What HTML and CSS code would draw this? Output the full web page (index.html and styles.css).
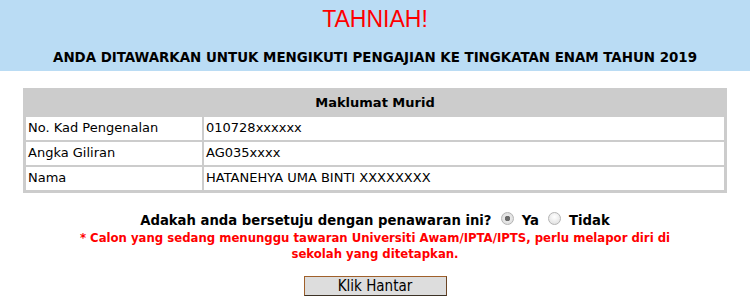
FILE: index.html
```html
<!DOCTYPE html>
<html lang="ms">
<head>
    <meta charset="UTF-8">
    <title>Tawaran Tingkatan Enam</title>
    <link rel="stylesheet" href="styles.css">
</head>
<body>

<div class="banner">
    <h1>TAHNIAH!</h1>
    <h2>ANDA DITAWARKAN UNTUK MENGIKUTI PENGAJIAN KE TINGKATAN ENAM TAHUN 2019</h2>
</div>

<table class="murid">
    <tr>
        <th colspan="2">Maklumat Murid</th>
    </tr>
    <tr>
        <td class="label">No. Kad Pengenalan</td>
        <td>010728xxxxxx</td>
    </tr>
    <tr>
        <td class="label">Angka Giliran</td>
        <td>AG035xxxx</td>
    </tr>
    <tr>
        <td class="label">Nama</td>
        <td>HATANEHYA UMA BINTI XXXXXXXX</td>
    </tr>
</table>

<form class="jawapan">
    <div class="soalan">
        Adakah anda bersetuju dengan penawaran ini?
        <input type="radio" name="setuju" value="ya" checked> Ya
        <input type="radio" name="setuju" value="tidak"> Tidak
    </div>
    <p class="nota">* Calon yang sedang menunggu tawaran Universiti Awam/IPTA/IPTS, perlu melapor diri di sekolah yang ditetapkan.</p>
    <button type="button" class="hantar">Klik Hantar</button>
</form>

</body>
</html>
```

FILE: styles.css
```css
body {
    margin: 0;
    font-family: "DejaVu Sans", Verdana, sans-serif;
    font-size: 13px;
    color: black;
    background: white;
}
.banner {
    background: #badcf4;
    text-align: center;
    padding: 6px 0 5px 0;
}
.banner h1 {
    margin: 0;
    font-family: "Liberation Sans", Arial, sans-serif;
    font-weight: normal;
    font-size: 23px;
    line-height: 26px;
    color: red;
}
.banner h2 {
    margin: 16px 0 0 0;
    font-family: "DejaVu Sans Condensed", Tahoma, sans-serif;
    font-size: 14.9px;
    line-height: 18px;
}
.murid {
    margin: 17px auto 0 auto;
    width: 704px;
    border: 1px solid #cccccc;
    border-spacing: 2px;
    background: #cccccc;
}
.murid th {
    background: #cccccc;
    padding: 4px 2px;
    line-height: 16px;
    font-weight: bold;
}
.murid td {
    background: white;
    padding: 3px 2px 4px 2px;
    line-height: 16px;
}
.murid td.label {
    width: 172px;
}
.jawapan {
    text-align: center;
    margin-top: 17px;
}
.soalan {
    font-family: "DejaVu Sans Condensed", Tahoma, sans-serif;
    font-size: 14.7px;
    font-weight: bold;
    line-height: 19px;
}
.soalan input {
    appearance: none;
    width: 13px;
    height: 13px;
    margin: 0 3px 0 5px;
    vertical-align: 0;
    border: 1px solid #b4b4b4;
    border-radius: 50%;
    background: radial-gradient(circle at 50% 35%, #ffffff, #dcdcdc);
}
.soalan input:checked {
    background: radial-gradient(circle, #6a6a6a 0, #6a6a6a 2.5px, #e8e8e8 3px, #d8d8d8);
}
.nota {
    margin: 1px auto 0 auto;
    width: 620px;
    font-family: "DejaVu Sans Condensed", Tahoma, sans-serif;
    font-weight: bold;
    line-height: 16px;
    color: red;
}
.hantar {
    margin-top: 14px;
    width: 143px;
    height: 20px;
    padding: 0;
    font-family: "DejaVu Sans Condensed", Tahoma, sans-serif;
    font-size: 15px;
    line-height: 18px;
    color: black;
    background: #dddddd;
    border: 1px solid;
    border-color: #a0602a #6a4424 #3c3226 #a0602a;
}
```
